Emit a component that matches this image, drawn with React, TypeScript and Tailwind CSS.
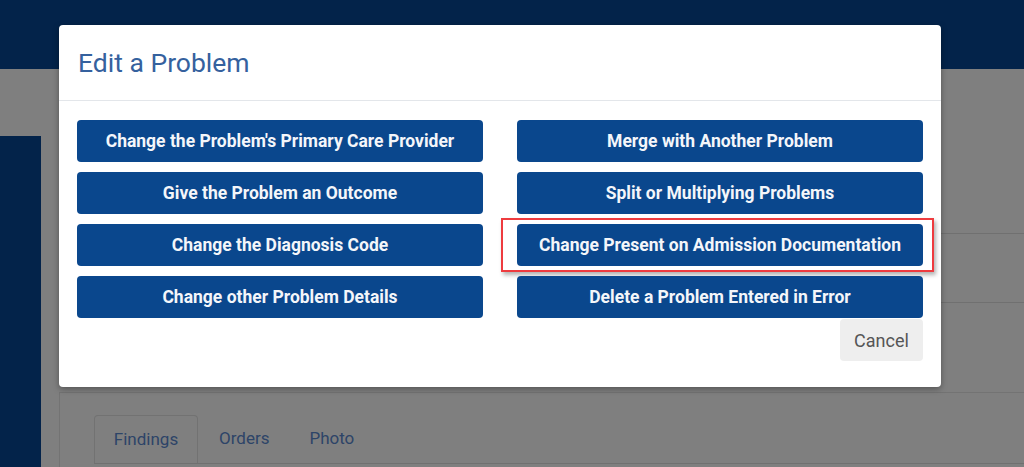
import React from "react";

const left = [
  "Change the Problem's Primary Care Provider",
  "Give the Problem an Outcome",
  "Change the Diagnosis Code",
  "Change other Problem Details",
];
const right = [
  "Merge with Another Problem",
  "Split or Multiplying Problems",
  "Change Present on Admission Documentation",
  "Delete a Problem Entered in Error",
];

function Btn({ label, highlight }: { label: string; highlight?: boolean }) {
  return (
    <div className="relative">
      {highlight && (
        <div className="absolute -left-[16px] -right-[11px] -top-[6px] -bottom-[6px] border-2 border-[#ee3b3f] shadow-[2px_3px_4px_rgba(0,0,0,0.3)]" />
      )}
      <button className="relative w-full h-[42px] rounded-[4px] bg-[#0a478d] text-[#f4f6fa] text-[17.5px] font-bold flex items-center justify-center">
        {label}
      </button>
    </div>
  );
}

export default function App() {
  return (
    <div
      className="relative w-[1024px] h-[467px] overflow-hidden bg-[#7f7f7f] flex flex-col"
      style={{ fontFamily: "Roboto, 'Liberation Sans', sans-serif" }}
    >
      <div className="h-[69px] shrink-0 bg-[#03234a]" />
      <div className="flex flex-1">
        <div className="w-[41px] shrink-0 flex flex-col pt-[67px]">
          <div className="flex-1 bg-[#03234a]" />
        </div>
        <div className="flex-1 pl-[18px] flex flex-col">
          <div className="h-[164px] shrink-0" />
          <div className="h-[70px] shrink-0 border-y border-[#707070]" />
          <div className="h-[89px] shrink-0" />
          <div className="flex-1 border-t border-l border-[#737373] pt-[23px] pl-[34px]">
            <div className="flex items-end h-[48px] border-b border-[#707070] text-[17px] text-[#2d4468]">
              <div className="w-[104px] h-[48px] border border-b-0 border-[#727272] rounded-t-[4px] flex items-center justify-center">
                Findings
              </div>
              <div className="h-[48px] flex items-center pl-[21px] pr-[20px]">Orders</div>
              <div className="h-[48px] flex items-center pl-[20px]">Photo</div>
            </div>
          </div>
        </div>
      </div>

      <div className="absolute left-[59px] top-[25px] w-[882px] h-[362px] bg-white rounded-[4px] shadow-[0_2px_6px_rgba(0,0,0,0.35)] flex flex-col">
        <div className="h-[76px] shrink-0 border-b border-[#e3e6ea] px-[19px] flex items-center">
          <h1 className="text-[26.5px] text-[#35619e] font-normal leading-none mt-[1px]">Edit a Problem</h1>
        </div>
        <div className="px-[18px] pt-[19px]">
          <div className="grid grid-cols-2 gap-x-[34px] gap-y-[10px]">
            <Btn label={left[0]} />
            <Btn label={right[0]} />
            <Btn label={left[1]} />
            <Btn label={right[1]} />
            <Btn label={left[2]} />
            <Btn label={right[2]} highlight />
            <Btn label={left[3]} />
            <Btn label={right[3]} />
          </div>
          <div className="flex justify-end mt-[1px]">
            <button className="h-[42px] w-[83px] rounded-[4px] bg-[#eeeeee] text-[#555555] text-[18px]">
              Cancel
            </button>
          </div>
        </div>
      </div>
    </div>
  );
}
